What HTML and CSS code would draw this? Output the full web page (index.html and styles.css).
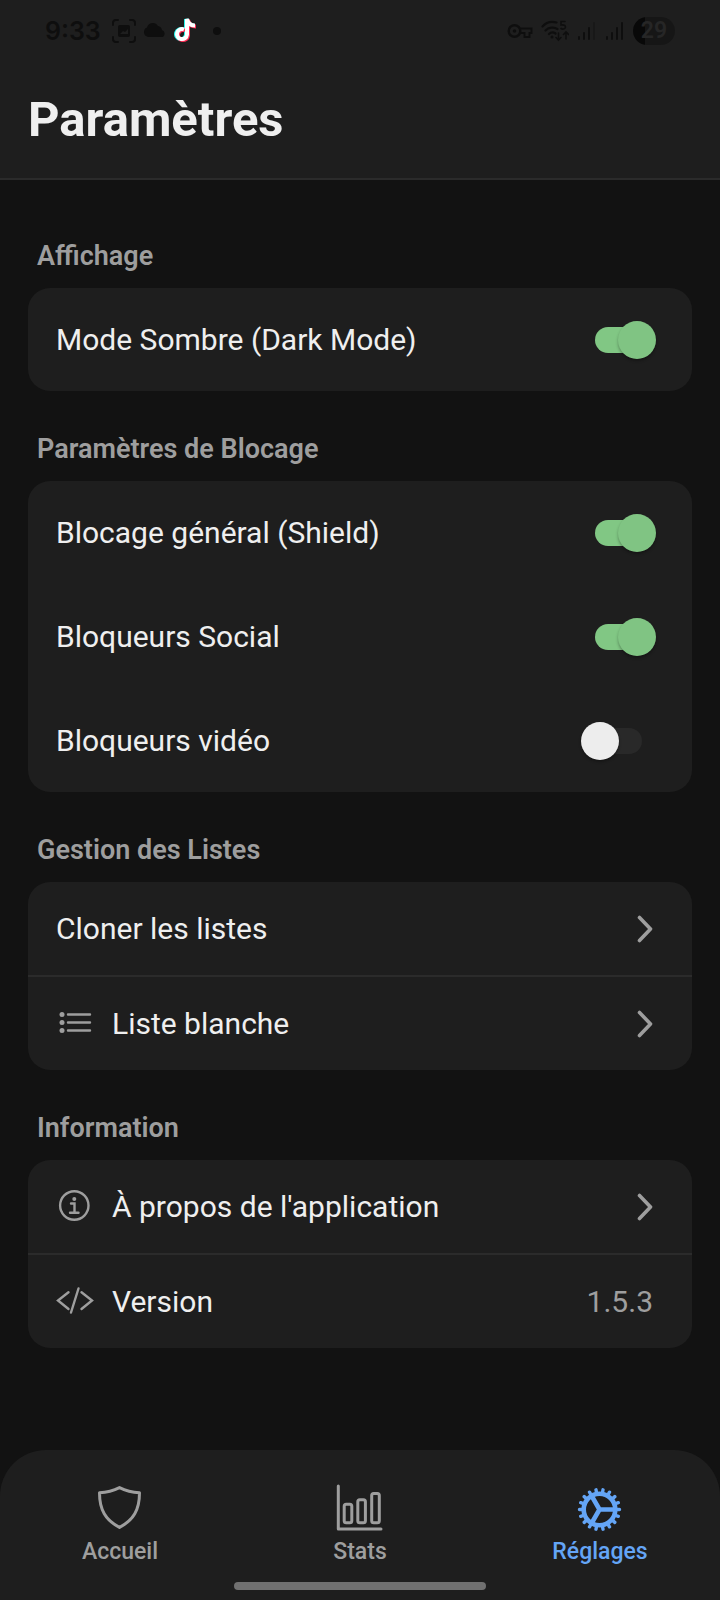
FILE: index.html
```html
<!DOCTYPE html>
<html lang="fr">
<head>
<meta charset="utf-8">
<meta name="viewport" content="width=device-width, initial-scale=1">
<title>Paramètres</title>
<link rel="stylesheet" href="styles.css">
</head>
<body>
<div class="app">
  <header class="header">
    <div class="status">
      <div class="status-group status-left">
        <span class="clock">9:33</span>
        <svg class="st-icon" width="24" height="24" viewBox="0 0 24 24" fill="none" stroke="currentColor" stroke-width="2" stroke-linecap="round"><path d="M1 6V4a3 3 0 0 1 3-3h2M18 1h2a3 3 0 0 1 3 3v2M23 18v2a3 3 0 0 1-3 3h-2M6 23H4a3 3 0 0 1-3-3v-2"/><rect x="6" y="6" width="12" height="12" rx="2" fill="currentColor" stroke="none"/><path d="M8 15l3-3 2 1 3-3v5z" fill="#1e1e1e" stroke="none"/></svg>
        <svg class="st-icon" width="24" height="24" viewBox="0 0 24 24"><path fill="currentColor" d="M5 18a5 5 0 0 1-1-9.500A6 6 0 0 1 15 7a5 5 0 0 1 4 4 4 4 0 0 1 1 7z"/></svg>
        <svg class="st-icon" width="24" height="26" viewBox="0 0 24 26" fill="none" stroke-width="4"><path stroke="#25f4ee" d="M10 11.500a5 5 0 1 0 3 5V1c1 4 4 6.500 8 6.500" transform="translate(-1 0)"/><path stroke="#fe2c55" d="M10 11.500a5 5 0 1 0 3 5V1c1 4 4 6.500 8 6.500" transform="translate(1 1)"/><path stroke="#fff" d="M10 11.500a5 5 0 1 0 3 5V1c1 4 4 6.500 8 6.500"/></svg>
        <span class="dot"></span>
      </div>
      <div class="status-group status-right">
        <svg class="st-icon" width="26" height="16" viewBox="0 0 26 16" fill="none" stroke="currentColor"><circle cx="7.500" cy="8" r="5.800" stroke-width="2.400"/><circle cx="7.500" cy="8" r="1.800" fill="currentColor" stroke="none"/><path stroke-width="2" d="M13 5.500h11.500v4.500h-2v4h-5v-4h-4.500"/></svg>
        <svg class="st-icon" width="28" height="22" viewBox="0 0 28 22" fill="none" stroke="currentColor" stroke-width="2.200" stroke-linecap="round"><path d="M1.500 6.500C5 2.500 10 1 15.500 2.500M4.500 10.500c3-3 8-4 12-1.500M8 14c2-2 4.500-2 6.500-.5"/><circle cx="11" cy="17" r="1.500" fill="currentColor" stroke="none"/><path stroke-width="1.600" d="M24 1.500h-4v3.500c3-.5 4.500.5 4.500 2s-2.500 3-4.500 1.500M17.500 13v7M15 17.500l2.500 2.500 2.500-2.500M25 19v-7M22.500 14.500l2.500-2.500 2.500 2.500"/></svg>
        <svg class="st-icon" width="20" height="20" viewBox="0 0 20 20" fill="none" stroke="currentColor" stroke-width="2" stroke-linecap="round"><path d="M2 16v2M7 12v6M12 7v11"/><path opacity=".4" d="M17 2v16"/></svg>
        <svg class="st-icon" width="20" height="20" viewBox="0 0 20 20" fill="none" stroke="currentColor" stroke-width="2" stroke-linecap="round"><path d="M2 16v2M7 12v6M12 7v11M17 2v16"/></svg>
        <span class="battery">29</span>
      </div>
    </div>
    <h1 class="title">Paramètres</h1>
  </header>

  <main class="content">
    <section class="section">
      <h2 class="section-title">Affichage</h2>
      <div class="card">
        <label class="switch-row"><span>Mode Sombre (Dark Mode)</span><input class="switch" type="checkbox" role="switch" checked></label>
      </div>
    </section>

    <section class="section">
      <h2 class="section-title">Paramètres de Blocage</h2>
      <div class="card">
        <label class="switch-row"><span>Blocage général (Shield)</span><input class="switch" type="checkbox" role="switch" checked></label>
        <label class="switch-row"><span>Bloqueurs Social</span><input class="switch" type="checkbox" role="switch" checked></label>
        <label class="switch-row"><span>Bloqueurs vidéo</span><input class="switch" type="checkbox" role="switch"></label>
      </div>
    </section>

    <section class="section">
      <h2 class="section-title">Gestion des Listes</h2>
      <div class="card list">
        <button class="item" type="button"><span class="item-label">Cloner les listes</span>
          <svg class="chevron" width="16" height="28" viewBox="0 0 16 28"><path d="M2.500 2.500l11 11.500-11 11.500"/></svg></button>
        <button class="item" type="button">
          <svg class="item-icon" width="36" height="32" viewBox="0 0 36 32"><path d="M12 6.500h22M12 14.500h22M12 22.500h22"/><g fill="currentColor" stroke="none"><circle cx="6" cy="6.500" r="2.500"/><circle cx="6" cy="14.500" r="2.500"/><circle cx="6" cy="22.500" r="2.500"/></g></svg>
          <span class="item-label">Liste blanche</span>
          <svg class="chevron" width="16" height="28" viewBox="0 0 16 28"><path d="M2.500 2.500l11 11.500-11 11.500"/></svg></button>
      </div>
    </section>

    <section class="section">
      <h2 class="section-title">Information</h2>
      <div class="card list">
        <button class="item" type="button">
          <svg class="item-icon" width="36" height="32" viewBox="0 0 36 32"><circle cx="18.300" cy="14.500" r="14.200"/><circle cx="18.300" cy="8" r="2" fill="currentColor" stroke="none"/><path d="M15 12.500h3.500v9M14 21.800h8.500"/></svg>
          <span class="item-label">À propos de l'application</span>
          <svg class="chevron" width="16" height="28" viewBox="0 0 16 28"><path d="M2.500 2.500l11 11.500-11 11.500"/></svg></button>
        <div class="item">
          <svg class="item-icon" width="36" height="32" viewBox="0 0 36 32"><path d="M12.500 6.300L2 14.500l10.500 8.500M25.500 6.300L36 14.500 25.500 23M22.500 2.500l-7.500 24"/></svg>
          <span class="item-label">Version</span>
          <span class="value">1.5.3</span>
        </div>
      </div>
    </section>
  </main>

  <nav class="tabbar" aria-label="Navigation principale">
    <div class="tabs">
      <a class="tab" href="#accueil">
        <svg width="48" height="48" viewBox="0 0 48 48"><path d="M23.500 3.600C17.500 6.600 10.500 8.400 3.500 8.800 3.500 26 9.500 36 23.500 43.400 37.500 36 43.500 26 43.500 8.800 36.500 8.400 29.500 6.600 23.500 3.600z"/></svg>
        <span>Accueil</span></a>
      <a class="tab" href="#stats">
        <svg width="48" height="48" viewBox="0 0 48 48"><path d="M2.300 2v43H45"/><rect x="8.200" y="20.200" width="7.600" height="18.600" rx="2"/><rect x="21.800" y="15.800" width="7.600" height="23" rx="2"/><rect x="35.700" y="9.500" width="7.600" height="29.300" rx="2"/></svg>
        <span>Stats</span></a>
      <a class="tab active" href="#reglages" aria-current="page">
        <svg width="48" height="48" viewBox="-23.500 -25.500 48 48"><circle r="15.800" stroke-width="4.600"/><path stroke-width="4.600" stroke-linecap="butt" d="M0 0H15M0 0L-7.500 13M0 0L-7.500-13"/><path stroke-width="3.400" d="M16 0h4M15 5.500l3.800 1.300M12.300 10.300l3 2.600M8 13.900l2 3.400M2.800 15.800l.7 3.900M-2.800 15.800l-.7 3.900M-8 13.900l-2 3.400M-12.300 10.300l-3 2.600M-15 5.500l-3.800 1.300M-16 0h-4M-15-5.500l-3.800-1.300M-12.300-10.300l-3-2.600M-8-13.900l-2-3.400M-2.800-15.800l-.7-3.900M2.800-15.800l.7-3.900M8-13.900l2-3.400M12.300-10.300l3-2.600M15-5.500l3.800-1.300"/></svg>
        <span>Réglages</span></a>
    </div>
    <div class="home-bar"></div>
  </nav>
</div>
</body>
</html>
```

FILE: styles.css
```css
:root {
  --bg: #121212;
  --surface: #1e1e1e;
  --line: #2b2b2b;
  --text: #efefef;
  --muted: #9e9e9e;
  --green: #81c784;
  --blue: #64a5f6;
}

* {
  box-sizing: border-box;
}

body {
  margin: 0;
  background: var(--bg);
  color: var(--text);
  font-family: Roboto, "Liberation Sans", sans-serif;
}

.app {
  display: flex;
  flex-direction: column;
  min-height: 100vh;
}

.header {
  background: var(--surface);
  border-bottom: 2px solid var(--line);
}

.status {
  display: flex;
  justify-content: space-between;
  align-items: center;
  height: 62px;
  padding: 0 45px;
  color: #0e0e0e;
}

.status-group {
  display: flex;
  align-items: center;
  gap: 8px;
}

.status-left {
  gap: 7px;
}

.st-icon {
  display: block;
}

.clock {
  margin-right: 4px;
  font-family: Inter, Roboto, sans-serif;
  font-size: 25px;
  font-weight: 600;
  line-height: 32px;
}

.dot {
  width: 8px;
  height: 8px;
  margin-left: 8px;
  border-radius: 50%;
  background: currentColor;
}

.battery {
  width: 42px;
  border-radius: 14px;
  background: linear-gradient(90deg, #080808 29%, #161616 29%);
  color: #262626;
  font-size: 23px;
  font-weight: 600;
  line-height: 28px;
  text-align: center;
}

.title {
  margin: 0;
  padding: 28px;
  font-size: 49px;
  font-weight: 700;
  line-height: 60px;
}

.content {
  display: flex;
  flex: 1;
  flex-direction: column;
  gap: 42px;
  padding: 60px 28px;
}

.section-title {
  margin: 0 0 16px;
  padding: 0 9px;
  color: var(--muted);
  font-size: 27px;
  font-weight: 600;
  line-height: 32px;
}

.card {
  display: flex;
  flex-direction: column;
  gap: 1px;
  overflow: hidden;
  border-radius: 22px;
  background: var(--surface);
  font-size: 30px;
  line-height: 36px;
}

.list {
  gap: 0;
}

.switch-row {
  display: flex;
  align-items: center;
  justify-content: space-between;
  min-height: 103px;
  padding: 0 36px 0 28px;
}

.switch {
  position: relative;
  flex: none;
  width: 75px;
  height: 38px;
  margin: 0;
  appearance: none;
}

.switch::before,
.switch::after {
  content: "";
  position: absolute;
}

.switch::before {
  inset: 6px 14px;
  border-radius: 13px;
  background: #292929;
}

.switch::after {
  top: 0;
  left: 0;
  width: 38px;
  height: 38px;
  border-radius: 50%;
  background: #ededed;
  box-shadow: 0 2px 3px rgba(0, 0, 0, 0.3);
}

.switch:checked::before {
  background: var(--green);
}

.switch:checked::after {
  left: 37px;
  background: #80c483;
}

.item {
  display: flex;
  align-items: center;
  gap: 20px;
  min-height: 93px;
  padding: 0 39px 0 28px;
  border: 0;
  background: none;
  color: inherit;
  font: inherit;
  text-align: left;
}

.item + .item {
  min-height: 95px;
  border-top: 2px solid var(--line);
}

.item-label {
  flex: 1;
}

.item-icon {
  flex: none;
  overflow: visible;
  fill: none;
  stroke: currentColor;
  stroke-width: 2.4;
  stroke-linecap: round;
  color: var(--muted);
}

.chevron {
  flex: none;
  fill: none;
  stroke: var(--muted);
  stroke-width: 3.6;
  stroke-linecap: round;
  stroke-linejoin: round;
}

.value {
  color: var(--muted);
}

.tabbar {
  padding: 34px 0 10px;
  border-radius: 46px 46px 0 0;
  background: var(--surface);
}

.tabs {
  display: grid;
  grid-template-columns: repeat(3, 1fr);
}

.tab {
  display: flex;
  flex-direction: column;
  align-items: center;
  gap: 5px;
  color: var(--muted);
  font-size: 23px;
  font-weight: 500;
  line-height: 30px;
  text-decoration: none;
}

.tab svg {
  fill: none;
  stroke: currentColor;
  stroke-width: 3;
  stroke-linecap: round;
  stroke-linejoin: round;
}

.active {
  color: var(--blue);
}

.home-bar {
  width: 35%;
  height: 8px;
  margin: 15px auto 0;
  border-radius: 4px;
  background: #707070;
}
```
